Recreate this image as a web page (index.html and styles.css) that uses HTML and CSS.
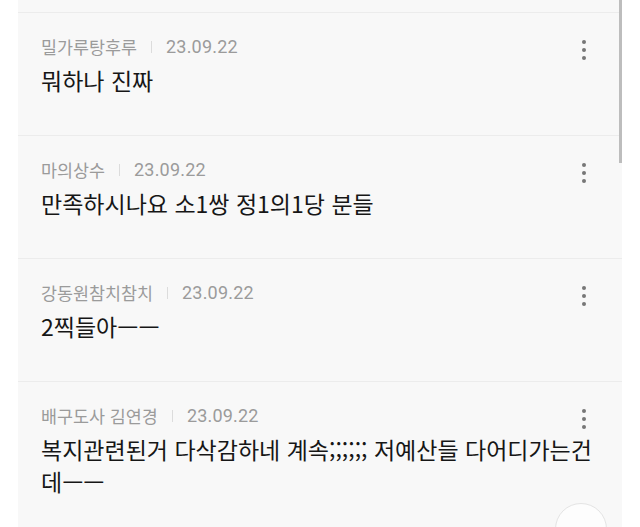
FILE: index.html
```html
<!DOCTYPE html>
<html lang="ko">
<head>
    <meta charset="UTF-8">
    <meta name="viewport" content="width=device-width, initial-scale=1.0">
    <title>댓글</title>
    <link rel="stylesheet" href="styles.css">
</head>
<body>
<div class="page">
    <!-- Comment list -->
    <div class="list">
        <div class="item item-partial"></div>

        <div class="item">
            <div class="item-head">
                <div class="meta">
                    <span class="name">밀가루탕후루</span>
                    <span class="bar"></span>
                    <span class="date">23.09.22</span>
                </div>
                <svg class="more" viewBox="0 0 4 26" width="4" height="26">
                    <circle cx="2" cy="5" r="2"/>
                    <circle cx="2" cy="13" r="2"/>
                    <circle cx="2" cy="21" r="2"/>
                </svg>
            </div>
            <p class="text">뭐하나 진짜</p>
        </div>

        <div class="item">
            <div class="item-head">
                <div class="meta">
                    <span class="name">마의상수</span>
                    <span class="bar"></span>
                    <span class="date">23.09.22</span>
                </div>
                <svg class="more" viewBox="0 0 4 26" width="4" height="26">
                    <circle cx="2" cy="5" r="2"/>
                    <circle cx="2" cy="13" r="2"/>
                    <circle cx="2" cy="21" r="2"/>
                </svg>
            </div>
            <p class="text">만족하시나요 소1쌍 정1의1당 분들</p>
        </div>

        <div class="item">
            <div class="item-head">
                <div class="meta">
                    <span class="name">강동원참치참치</span>
                    <span class="bar"></span>
                    <span class="date">23.09.22</span>
                </div>
                <svg class="more" viewBox="0 0 4 26" width="4" height="26">
                    <circle cx="2" cy="5" r="2"/>
                    <circle cx="2" cy="13" r="2"/>
                    <circle cx="2" cy="21" r="2"/>
                </svg>
            </div>
            <p class="text">2찍들아ㅡㅡ</p>
        </div>

        <div class="item">
            <div class="item-head">
                <div class="meta">
                    <span class="name">배구도사 김연경</span>
                    <span class="bar"></span>
                    <span class="date">23.09.22</span>
                </div>
                <svg class="more" viewBox="0 0 4 26" width="4" height="26">
                    <circle cx="2" cy="5" r="2"/>
                    <circle cx="2" cy="13" r="2"/>
                    <circle cx="2" cy="21" r="2"/>
                </svg>
            </div>
            <p class="text">복지관련된거 다삭감하네 계속;;;;;; 저예산들 다어디가는건 데ㅡㅡ</p>
        </div>
    </div>

    <div class="scrollbar"></div>
    <button class="top-btn"></button>
</div>
</body>
</html>
```

FILE: styles.css
```css
body {
    margin: 0;
    padding: 0;
    background-color: #fff;
    font-family: "Noto Sans CJK KR", sans-serif;
    color: #161616;
}

.page {
    position: relative;
    height: 527px;
    overflow: hidden;
}

.list {
    margin-left: 18px;
    width: 604px;
    min-height: 527px;
    background: #f8f8f8;
}

.item {
    box-sizing: border-box;
    min-height: 123px;
    border-top: 1px solid #ececec;
    padding: 24px 18px 0 23px;
}

.item-partial {
    min-height: 12px;
    height: 12px;
    border-top: none;
    padding: 0;
}

.item-head {
    display: flex;
    justify-content: space-between;
    align-items: flex-start;
    padding-right: 18px;
}

.meta {
    display: flex;
    align-items: center;
    height: 20px;
    color: #9b9b9b;
}

.name {
    font-size: 17.4px;
    line-height: 20px;
}

.bar {
    width: 1px;
    height: 12px;
    margin: 0 14px;
    background: #dcdcdc;
}

.date {
    font-family: Roboto, sans-serif;
    font-size: 18px;
    line-height: 20px;
    letter-spacing: 0.2px;
}

.more {
    fill: #777;
}

.text {
    margin: 1px 0 0;
    font-size: 23px;
    line-height: 32px;
    word-break: keep-all;
}

.scrollbar {
    position: absolute;
    top: 0;
    left: 619px;
    width: 3px;
    height: 163px;
    background: #bdbdbd;
}

.top-btn {
    position: absolute;
    left: 555px;
    top: 503px;
    width: 52px;
    height: 52px;
    border: 1px solid #e4e4e4;
    border-radius: 50%;
    background: #fdfdfd;
    padding: 0;
}
```
